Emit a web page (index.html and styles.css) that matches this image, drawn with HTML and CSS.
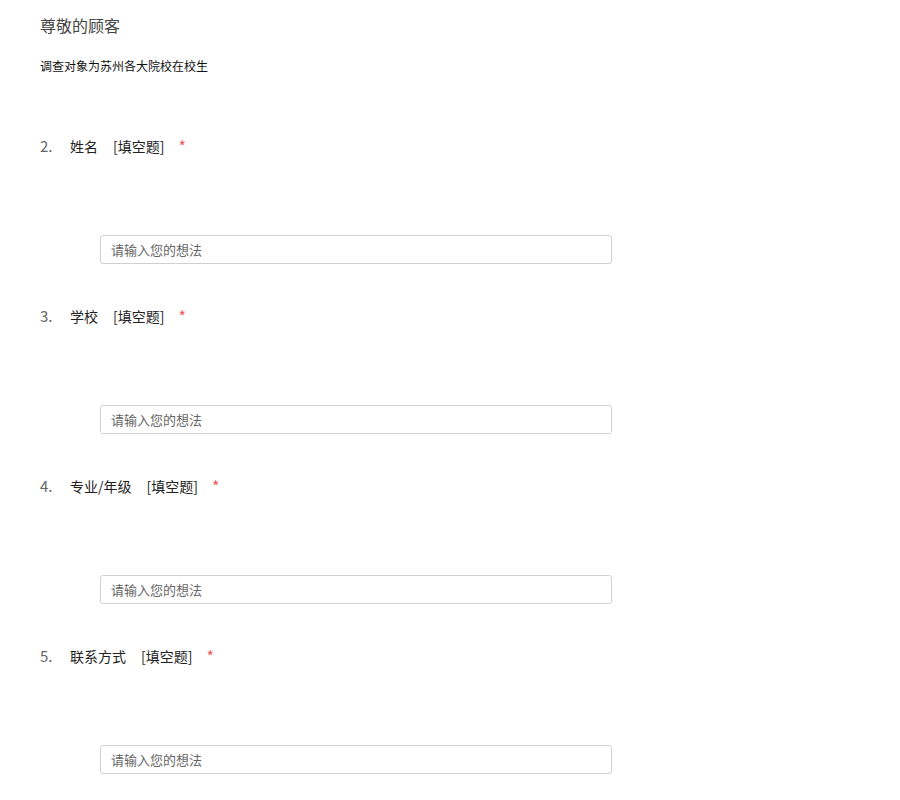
FILE: index.html
```html
<!DOCTYPE html>
<html lang="zh-CN">
<head>
<meta charset="utf-8">
<title>问卷</title>
<link rel="stylesheet" href="styles.css">
</head>
<body>
<div class="page">
  <h1 class="title">尊敬的顾客</h1>
  <p class="desc">调查对象为苏州各大院校在校生</p>

  <div class="question">
    <div class="q-head"><span class="q-num">2.</span><span class="q-label">姓名</span><span class="q-type">[填空题]</span><span class="q-req">*</span></div>
    <div class="q-body"><input class="q-input" type="text" placeholder="请输入您的想法"></div>
  </div>

  <div class="question">
    <div class="q-head"><span class="q-num">3.</span><span class="q-label">学校</span><span class="q-type">[填空题]</span><span class="q-req">*</span></div>
    <div class="q-body"><input class="q-input" type="text" placeholder="请输入您的想法"></div>
  </div>

  <div class="question">
    <div class="q-head"><span class="q-num">4.</span><span class="q-label">专业/年级</span><span class="q-type">[填空题]</span><span class="q-req">*</span></div>
    <div class="q-body"><input class="q-input" type="text" placeholder="请输入您的想法"></div>
  </div>

  <div class="question">
    <div class="q-head"><span class="q-num">5.</span><span class="q-label">联系方式</span><span class="q-type">[填空题]</span><span class="q-req">*</span></div>
    <div class="q-body"><input class="q-input" type="text" placeholder="请输入您的想法"></div>
  </div>
</div>
</body>
</html>
```
FILE: styles.css
```css
html, body {
  margin: 0;
  padding: 0;
  background: #ffffff;
}
body {
  font-family: "Noto Sans CJK SC", "Noto Sans", "Liberation Sans", sans-serif;
  color: #333333;
}
.page {
  padding: 15px 0 0 40px;
}
.title {
  margin: 0;
  font-size: 16px;
  line-height: 20px;
  font-weight: normal;
  color: #444444;
}
.desc {
  margin: 21px 0 0 0;
  font-size: 12px;
  line-height: 20px;
  color: #111111;
}
.question {
  margin-top: 60px;
}
.question + .question {
  margin-top: 42px;
}
.q-head {
  display: flex;
  align-items: center;
  font-size: 14px;
  line-height: 20px;
  height: 20px;
}
.q-num {
  width: 30px;
  color: #666666;
  font-size: 15px;
}
.q-label {
  color: #222222;
  margin-right: 15px;
}
.q-type {
  color: #222222;
  margin-right: 14px;
}
.q-req {
  color: #f05a5a;
  font-size: 16px;
}
.q-body {
  padding: 79px 0 0 60px;
}
.q-input {
  display: block;
  box-sizing: border-box;
  width: 512px;
  height: 29px;
  margin: 0;
  padding: 0 10px;
  border: 1px solid #d0d0d0;
  border-radius: 3px;
  font-family: "Noto Sans CJK SC", "Noto Sans", sans-serif;
  font-size: 13px;
  color: #333333;
  outline: none;
}
.q-input::placeholder {
  color: #666666;
}
```
